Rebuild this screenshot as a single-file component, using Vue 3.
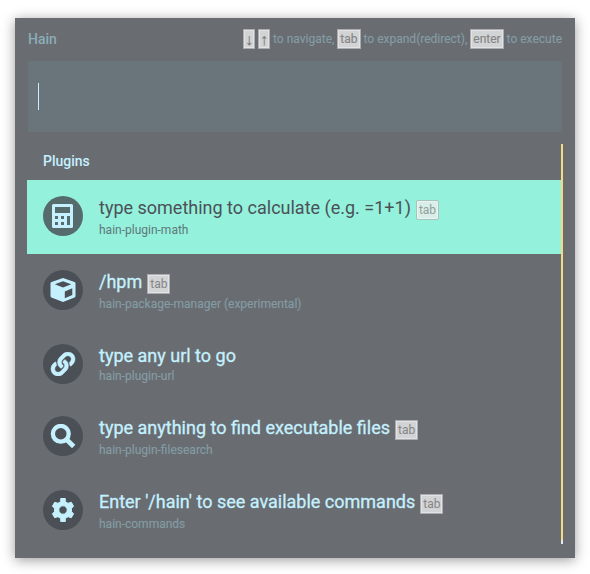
<script setup>
const rows = [
  { icon: 'calc', title: 'type something to calculate (e.g. =1+1)', sub: 'hain-plugin-math', tab: true, active: true },
  { icon: 'box', title: '/hpm', sub: 'hain-package-manager (experimental)', tab: true },
  { icon: 'link', title: 'type any url to go', sub: 'hain-plugin-url' },
  { icon: 'search', title: 'type anything to find executable files', sub: 'hain-plugin-filesearch', tab: true },
  { icon: 'gear', title: "Enter '/hain' to see available commands", sub: 'hain-commands', tab: true },
]
</script>

<template>
  <main class="window">
    <header class="header">
      <span class="brand">Hain</span>
      <span class="help"><kbd class="arrow">↓</kbd> <kbd class="arrow">↑</kbd> to navigate, <kbd>tab</kbd> to expand(redirect), <kbd>enter</kbd> to execute</span>
    </header>
    <div class="search"><span class="caret"></span></div>
    <section class="results">
      <div class="list">
        <h2 class="group">Plugins</h2>
        <div v-for="row in rows" :key="row.title" class="row" :class="{ active: row.active, plain: !row.tab }">
          <div class="avatar">
            <svg v-if="row.icon === 'calc'" viewBox="0 0 24 24">
              <path fill-rule="evenodd" d="M2.500 0h18a1.500 1.500 0 0 1 1.500 1.500v21a1.500 1.500 0 0 1-1.500 1.500h-18A1.500 1.500 0 0 1 1 22.500v-21A1.500 1.500 0 0 1 2.500 0zM4 3v6h15V3zM4 12v3h3v-3zM10 12v3h3v-3zM4 18v3h3v-3zM10 18v3h3v-3zM16 12v9h3v-9z" />
            </svg>
            <svg v-else-if="row.icon === 'box'" viewBox="0 0 26 24">
              <path fill-rule="evenodd" d="M13 0L24.500 4Q25.500 4.400 25.500 5.400V18Q25.500 19 24.600 19.400L13 24L1.400 19.400Q.5 19 .5 18V5.400Q.5 4.400 1.500 4zM13 3.200L4.800 6.200L13 9.400L21.200 6.200zM14.800 13.400V20.200L22.300 17V10.300z" />
            </svg>
            <svg v-else-if="row.icon === 'link'" viewBox="0 0 512 512">
              <path stroke="currentColor" stroke-width="10" d="M326.612 185.391c59.747 59.809 58.927 155.698.36 214.59-.11.12-.24.25-.36.37l-67.2 67.2c-59.27 59.27-155.699 59.262-214.96 0-59.27-59.26-59.27-155.7 0-214.96l37.106-37.106c9.84-9.84 26.786-3.3 27.294 10.606.648 17.722 3.826 35.527 9.69 52.721 1.986 5.822.567 12.262-3.783 16.612l-13.087 13.087c-28.026 28.026-28.905 73.66-1.155 101.96 28.024 28.579 74.086 28.749 102.325.51l67.2-67.19c28.191-28.191 28.073-73.757 0-101.83-3.701-3.694-7.429-6.564-10.341-8.569a16.037 16.037 0 0 1-6.947-12.606c-.396-10.567 3.348-21.456 11.698-29.806l21.054-21.055c5.521-5.521 14.182-6.199 20.584-1.731a152.482 152.482 0 0 1 20.522 17.197zM467.547 44.449c-59.261-59.262-155.69-59.27-214.96 0l-67.2 67.2c-.12.12-.25.25-.36.37-58.566 58.892-59.387 154.781.36 214.59a152.454 152.454 0 0 0 20.521 17.196c6.402 4.468 15.064 3.789 20.584-1.731l21.054-21.055c8.35-8.35 12.094-19.239 11.698-29.806a16.037 16.037 0 0 0-6.947-12.606c-2.912-2.005-6.64-4.875-10.341-8.569-28.073-28.073-28.191-73.639 0-101.83l67.2-67.19c28.239-28.239 74.3-28.069 102.325.51 27.75 28.3 26.872 73.934-1.155 101.96l-13.087 13.087c-4.35 4.35-5.769 10.79-3.783 16.612 5.864 17.194 9.042 34.999 9.69 52.721.509 13.906 17.454 20.446 27.294 10.606l37.106-37.106c59.271-59.259 59.271-155.699.001-214.959z" />
            </svg>
            <svg v-else-if="row.icon === 'search'" viewBox="0 0 24 24">
              <g fill="none" stroke="currentColor" stroke-width="4.300">
                <circle cx="9.800" cy="9.800" r="7.900" />
                <path stroke-width="4.800" d="M15.500 15.500L22.700 22.500" />
              </g>
            </svg>
            <svg v-else viewBox="0 0 24 24">
              <path stroke="currentColor" stroke-width="1" stroke-linejoin="round" fill-rule="evenodd" d="M9.700.5h4.600v3.200l2.800 1.600 3.200-1 2.300 4-2.100 1.900v3.600l2.100 1.900-2.300 4-3.200-1-2.800 1.600v3.200H9.700v-3.200l-2.800-1.600-3.200 1-2.300-4 2.100-1.900v-3.600L1.400 8.300l2.300-4 3.200 1 2.800-1.600zM12 7.800a4.200 4.200 0 1 0 0 8.400a4.200 4.200 0 1 0 0-8.400z" />
            </svg>
          </div>
          <div class="copy">
            <div class="title">{{ row.title }}<kbd v-if="row.tab">tab</kbd></div>
            <div class="sub">{{ row.sub }}</div>
          </div>
        </div>
      </div>
      <div class="scrollbar"></div>
    </section>
  </main>
</template>

<style>
body {
  background: #fff;
}
</style>

<style scoped>
.window {
  box-sizing: border-box;
  width: 560px;
  height: 540px;
  margin: 18px 15px;
  padding: 0 12px;
  display: flow-root;
  background: #696c71;
  box-shadow: 0 2px 12px rgba(0, 0, 0, 0.4);
  font-family: Roboto, sans-serif;
}
.header {
  box-sizing: border-box;
  height: 43px;
  padding: 0 1px 1px;
  display: flex;
  justify-content: space-between;
  align-items: center;
  color: #849ca4;
}
.brand {
  font-size: 14px;
  font-weight: 500;
  color: #8badb7;
}
.help {
  display: block;
  height: 20px;
  font-size: 12px;
  line-height: 20px;
  white-space: nowrap;
  -webkit-text-stroke: 0.15px currentColor;
}
kbd {
  display: inline-block;
  box-sizing: border-box;
  height: 20px;
  padding: 0 2px;
  border: 1px solid #aaadb0;
  box-shadow: inset 0 0 0 1px #e3e3e5;
  background: #d2d3d5;
  color: #858585;
  font-family: Roboto, sans-serif;
  font-size: 12px;
  font-weight: 400;
  line-height: 18px;
}
.help kbd {
  vertical-align: top;
}
.help .arrow {
  width: 12px;
  padding: 0 1px;
  text-align: center;
  font-family: "Liberation Serif", serif;
  font-size: 16px;
  line-height: 19px;
  color: #777;
}
.search {
  height: 71px;
  margin: 0 1px;
  padding: 22px 10px;
  box-sizing: border-box;
  background: #6a757b;
}
.caret {
  display: block;
  width: 1px;
  height: 27px;
  background: #c5f1ff;
}
.results {
  height: 400px;
  margin-top: 12px;
  display: flex;
  overflow: hidden;
}
.list {
  width: 534px;
}
.scrollbar {
  width: 2px;
  background: linear-gradient(#f4d982 396px, #e6e9ed 396px);
}
.group {
  height: 36px;
  margin: 0;
  padding: 0 16px;
  font-size: 14px;
  font-weight: 500;
  line-height: 35px;
  color: #c5f1ff;
}
.row {
  box-sizing: border-box;
  height: 74px;
  padding: 16px;
  display: flex;
  gap: 16px;
}
.row.plain {
  height: 72px;
}
.avatar {
  width: 40px;
  height: 40px;
  border-radius: 50%;
  display: flex;
  align-items: center;
  justify-content: center;
  background: #4b5057;
  color: #c5f1ff;
}
.avatar svg {
  width: 26px;
  height: 24px;
  fill: currentColor;
}
.title {
  height: 25px;
  font-size: 18px;
  line-height: 24px;
  color: #c5f1ff;
  white-space: nowrap;
  -webkit-text-stroke: 0.3px currentColor;
}
.title kbd {
  margin-left: 5px;
  vertical-align: top;
  position: relative;
  top: 4px;
  -webkit-text-stroke: 0;
}
.sub {
  font-size: 12px;
  line-height: 18px;
  color: #849ca4;
  -webkit-text-stroke: 0.15px currentColor;
}
.plain .title {
  height: 23px;
}
.active {
  background: #94f1dc;
}
.active .avatar {
  background: #566b6c;
}
.active .title {
  color: #4b5057;
  -webkit-text-stroke: 0;
}
.active .sub {
  color: #5f7779;
  -webkit-text-stroke: 0;
}
.active kbd {
  border-radius: 2px;
  background: #d9eee8;
  border-color: #a6c4bd;
  box-shadow: inset 0 0 0 1px #e9f5f1;
  color: #929f9c;
}
</style>
